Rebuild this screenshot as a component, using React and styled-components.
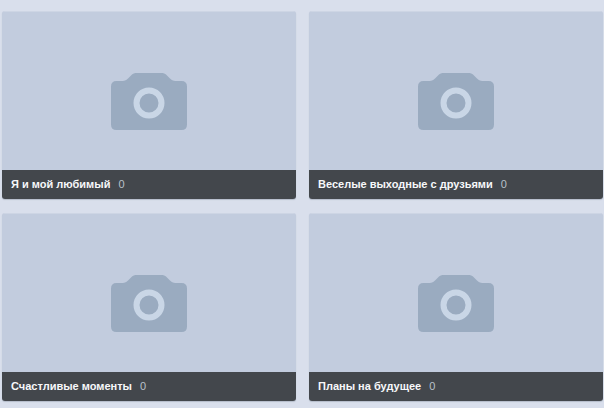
import styled, {createGlobalStyle} from "styled-components";

const GlobalStyle = createGlobalStyle`
    body {
        margin: 0;
        background: #d9dfec;
        font-family: "Liberation Sans", Arial, sans-serif;
    }
`;

const AlbumGrid = styled.main`
    display: grid;
    grid-template-columns: 1fr 1fr;
    gap: 14px 13px;
    padding: 11px 1px 7px 2px;
`;

const AlbumCard = styled.article`
    display: flex;
    flex-direction: column;
    overflow: hidden;
    border-radius: 3px;
    background: #c2ccde;
    box-shadow: 0 1px 1px #b4bcca;
`;

const Cover = styled.div`
    display: flex;
    justify-content: center;
    padding: 62px 0 39px;
    box-shadow: inset 0 1px 0 #cdd5e4;
`;

const Camera = styled.svg`
    display: block;
    width: 76px;
    height: 58px;
`;

const Caption = styled.div`
    display: flex;
    align-items: center;
    gap: 8px;
    padding: 7px 9px 8px;
    background: #43474c;
    font-size: 11px;
    line-height: 14px;
`;

const Title = styled.h2`
    margin: 0;
    color: #f7f8fa;
    font-size: 11px;
    font-weight: bold;
`;

const Count = styled.span`
    color: #b9c1ca;
`;

const albums = [
    {title: "Я и мой любимый", count: 0},
    {title: "Веселые выходные с друзьями", count: 0},
    {title: "Счастливые моменты", count: 0},
    {title: "Планы на будущее", count: 0},
];

function CameraIcon() {
    return (
        <Camera viewBox="0 0 76 58" aria-hidden="true">
            <path
                d="M5.5 8H11.5C14 8 15.5 7 17 5.5L20.5 2C22 .6 23.5 0 26 0H50C52.5 0 54 .6 55.5 2L59 5.5C60.5 7 62 8 64.5 8H70.5Q76 8 76 13.5V51.5Q76 57 70.5 57H5.5Q0 57 0 51.5V13.5Q0 8 5.5 8Z"
                fill="#9aabc0"
            />
            <circle cx="38" cy="30" r="12.5" fill="none" stroke="#c9d6e6" strokeWidth="6"/>
        </Camera>
    );
}

function Album(props) {
    const {title, count} = props;

    return (
        <AlbumCard>
            <Cover><CameraIcon/></Cover>
            <Caption>
                <Title>{title}</Title>
                <Count>{count}</Count>
            </Caption>
        </AlbumCard>
    );
}

export default function App() {
    return (
        <>
            <GlobalStyle/>
            <AlbumGrid>
                {albums.map((album) => <Album key={album.title} {...album}/>)}
            </AlbumGrid>
        </>
    );
}
